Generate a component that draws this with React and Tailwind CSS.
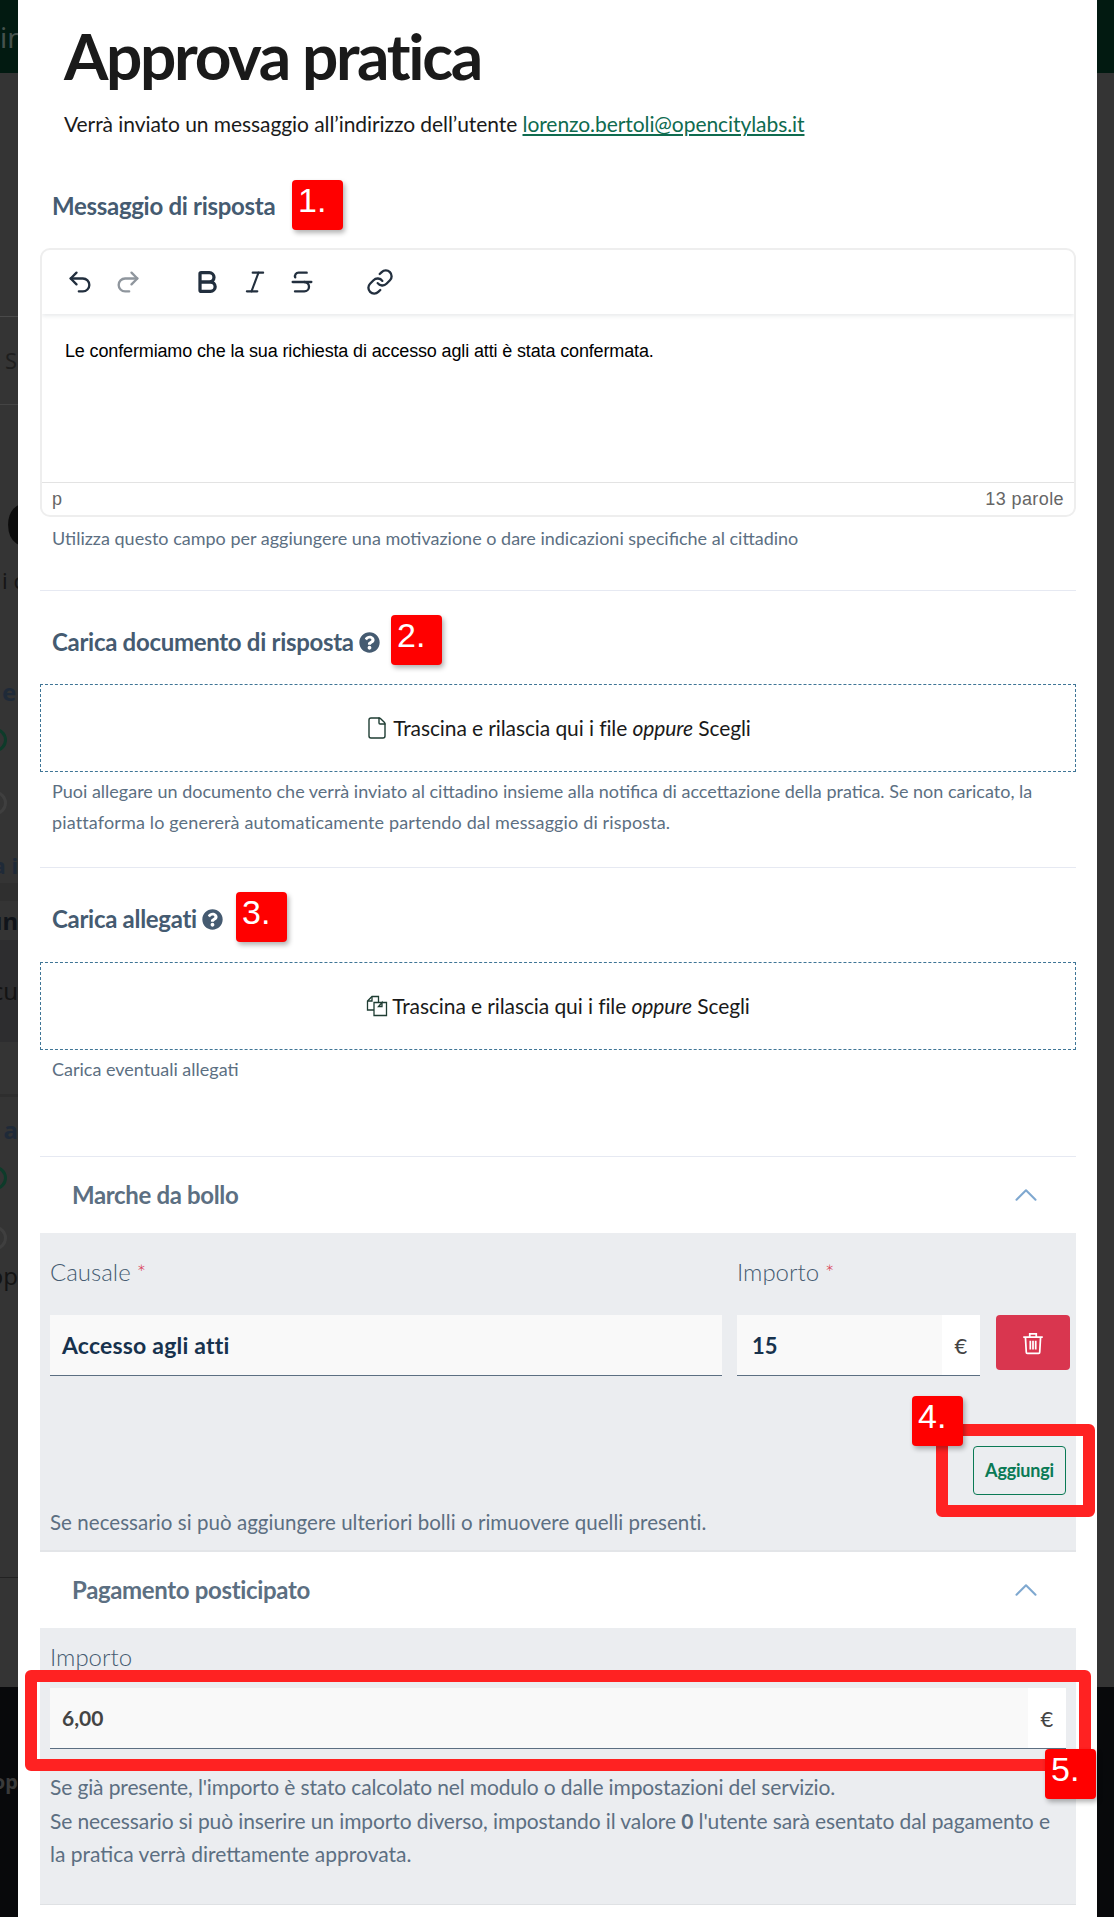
import React from "react";
import { Undo2, Redo2, Bold, Italic, Strikethrough, Link, File, ChevronUp } from "lucide-react";
import { FaQuestionCircle } from "react-icons/fa";

const stripRows = [
  { h: "h-[73px]", bg: "bg-[#021a11]", text: "in", cls: "text-[28px] text-[#46524d]" },
  { h: "h-[243px]" },
  { h: "h-px", bg: "bg-[#4a4a4a]" },
  { h: "h-[87px]", text: "S", cls: "pl-[5px] text-[22px] text-[#1e1e1e]" },
  { h: "h-px", bg: "bg-[#444]" },
  { h: "h-[85px]" },
  { h: "h-[66px]", text: "C", cls: "pl-[5px] text-[60px] font-black text-[#0c0c0c]" },
  { h: "h-[48px]", text: "i c", cls: "pl-[2px] text-[22px] text-[#161616]" },
  { h: "h-[64px]" },
  { h: "h-[48px]", text: "e", cls: "pl-[2px] text-[24px] font-bold text-[#1f2a38]" },
  { h: "h-[48px]", ring: "border-[#0e3b2a]" },
  { h: "h-[22px]" },
  { h: "h-[34px]", ring: "border-[#3f3f3f]" },
  { h: "h-[27px]" },
  { h: "h-[36px]", text: "a i", cls: "text-[22px] font-bold text-[#1f2a38] justify-end" },
  { h: "h-[18px]", bg: "bg-[#2f2f2f]" },
  { h: "h-[39px]", text: "un", cls: "text-[24px] font-bold text-[#10141a] justify-end" },
  { h: "h-[102px]", bg: "bg-[#2d2d2f]", text: "ocu", cls: "text-[24px] text-[#141414] justify-end" },
  { h: "h-[52px]" },
  { h: "h-[3px]", bg: "bg-[#2e2e2e]" },
  { h: "h-[13px]" },
  { h: "h-[40px]", text: "i a", cls: "text-[24px] font-bold text-[#1f2a38] justify-end" },
  { h: "h-[56px]", ring: "border-[#0e3b2a]" },
  { h: "h-[10px]" },
  { h: "h-[44px]", ring: "border-[#3f3f3f]" },
  { h: "h-[32px]", text: "op", cls: "text-[24px] text-[#141414] justify-end" },
  { h: "h-[285px]" },
  { h: "h-px", bg: "bg-[#222]" },
  { h: "h-[109px]" },
  { h: "h-[190px]", bg: "bg-[#08090b]", text: "op", cls: "text-[20px] font-bold text-[#3a3a3a] justify-end" },
  { h: "h-[40px]", bg: "bg-[#08090b]" },
];

function LeftStrip() {
  return (
    <div className="w-[18px] shrink-0 overflow-hidden bg-[#343434] font-['Noto_Sans',sans-serif]">
      {stripRows.map((r, i) => (
        <div key={i} className={`flex items-center overflow-hidden whitespace-nowrap ${r.h} ${r.bg || ""} ${r.cls || ""}`}>
          {r.text}
          {r.ring && <span className={`ml-[-17px] h-[24px] w-[24px] shrink-0 rounded-full border-[3px] ${r.ring}`} />}
        </div>
      ))}
    </div>
  );
}

function RightStrip() {
  return (
    <div className="flex w-[17px] shrink-0 flex-col">
      <div className="h-[73px] bg-[#021a11]" />
      <div className="h-[1614px] bg-[#343434]" />
      <div className="flex-1 bg-[#08090b]" />
    </div>
  );
}

function Badge({ n, className }) {
  return (
    <div className={`absolute h-[50px] w-[51px] rounded-[4px] bg-[#ff0000] px-[6px] pt-[1px] font-['Liberation_Sans',sans-serif] text-[34px] leading-[38px] text-white shadow-[2px_3px_5px_rgba(0,0,0,0.3)] ${className}`}>
      {n}
    </div>
  );
}

function HelpIcon() {
  return <FaQuestionCircle className="ml-[5px] h-[21px] w-[21px] text-[#455b71]" />;
}

function FilesIcon() {
  return (
    <svg viewBox="0 0 22 22" className="h-[22px] w-[22px] text-[#1f3d33]" fill="none" stroke="currentColor" strokeWidth="1.3">
      <path d="M8 15H1.5V6L6 1.5h6.5V7" />
      <path d="M2 6h4V2" />
      <path d="M8 7.5h8.5l4 0V20.5H8Z" />
      <path d="M16 7.5l-3.5 4h3.5Z" />
    </svg>
  );
}

function Dropzone({ icon }) {
  return (
    <div className="flex h-[88px] items-center justify-center border border-dashed border-[#3f7596] text-[21px] tracking-[-0.1px] text-[#1a1a1a]">
      {icon}
      <span className="ml-[4px]">
        Trascina e rilascia qui i file <em>oppure</em> Scegli
      </span>
    </div>
  );
}

function AccordionHeader({ title }) {
  return (
    <div className="flex h-[76px] items-center justify-between pl-[32px] pr-[31px]">
      <span className="text-[24px] font-bold tracking-[-0.35px] text-[#5c6f82]">{title}</span>
      <ChevronUp className="h-[38px] w-[38px] text-[#7fa8d0]" strokeWidth={1.3} />
    </div>
  );
}

function Amount({ value, className, textClass }) {
  return (
    <div className={`flex h-[61px] border-b border-[#5c6f82] bg-white ${className}`}>
      <div className={`flex flex-1 items-center bg-[#f9f9f9] font-bold ${textClass}`}>{value}</div>
      <div className="flex w-[38px] items-center justify-center text-[22px] text-[#444]">€</div>
    </div>
  );
}

const toolIcon = "h-[28px] w-[28px] text-[#222f3e]";
const sectionLabel = "flex h-[40px] items-center pl-[12px] text-[24px] font-bold tracking-[-0.3px] text-[#455b71]";
const helpText = "pl-[12px] text-[18px] leading-[31px] text-[#5c6f82]";

export default function App() {
  return (
    <div className="relative flex h-[1917px] w-[1114px] overflow-hidden font-['Lato',sans-serif]">
      <LeftStrip />
      <main className="w-[1079px] shrink-0 bg-white pl-[22px] pr-[21px]">
        <h1 className="mt-[20px] flex h-[72px] items-center pl-[24px] text-[64px] font-bold tracking-[-2.35px] text-[#1a1a1a]">Approva pratica</h1>
        <p className="mt-[12px] flex h-[40px] items-center pl-[24px] text-[21px] tracking-[-0.07px] text-[#1a1a1a]">
          <span className="whitespace-pre">Verrà inviato un messaggio all’indirizzo dell’utente </span>
          <a className="text-[#0f6b4f] underline">lorenzo.bertoli@opencitylabs.it</a>
        </p>

        <div className={`mt-[42px] ${sectionLabel}`}>Messaggio di risposta</div>
        <div className="mt-[22px] flex h-[269px] flex-col overflow-hidden rounded-[10px] border-2 border-[#eeeeee]">
          <div className="flex h-[64px] items-center pl-[24px] shadow-[0_2px_4px_rgba(34,47,62,0.1)]">
            <Undo2 className={toolIcon} strokeWidth={2} />
            <Redo2 className={`${toolIcon} ml-[20px] opacity-50`} strokeWidth={2} />
            <Bold className={`${toolIcon} ml-[51px]`} strokeWidth={2.8} />
            <Italic className={`${toolIcon} ml-[20px]`} strokeWidth={1.8} />
            <Strikethrough className={`${toolIcon} ml-[19px]`} strokeWidth={2} />
            <Link className={`${toolIcon} ml-[50px]`} strokeWidth={2} />
          </div>
          <div className="h-[168px] pl-[23px] pt-[24px] font-['Liberation_Sans',sans-serif] text-[18px] leading-[26px] tracking-[-0.14px] text-black">
            Le confermiamo che la sua richiesta di accesso agli atti è stata confermata.
          </div>
          <div className="flex h-[33px] items-center justify-between border-t border-[#e3e3e3] pl-[10px] pr-[10px] font-['Liberation_Sans',sans-serif] text-[18px] tracking-[0.4px] text-[#666]">
            <span>p</span>
            <span>13 parole</span>
          </div>
        </div>
        <div className="flex h-[42px] items-center pl-[12px] text-[18px] text-[#5c6f82]">
          Utilizza questo campo per aggiungere una motivazione o dare indicazioni specifiche al cittadino
        </div>

        <div className="mt-[31px] h-px bg-[#e6e9f2]" />
        <div className={`mt-[31px] ${sectionLabel}`}>
          Carica documento di risposta
          <HelpIcon />
        </div>
        <div className="mt-[22px]">
          <Dropzone icon={<File className="h-[24px] w-[24px] text-[#1f3d33]" strokeWidth={1.4} />} />
        </div>
        <p className={`mt-[4px] ${helpText}`}>
          Puoi allegare un documento che verrà inviato al cittadino insieme alla notifica di accettazione della pratica. Se non caricato, la
          <br />
          <span className="tracking-[0.14px]">piattaforma lo genererà automaticamente partendo dal messaggio di risposta.</span>
        </p>

        <div className="mt-[29px] h-px bg-[#e6e9f2]" />
        <div className={`mt-[31px] ${sectionLabel}`}>
          Carica allegati
          <HelpIcon />
        </div>
        <div className="mt-[23px]">
          <Dropzone icon={<FilesIcon />} />
        </div>
        <p className={`mt-[4px] h-[31px] ${helpText}`}>Carica eventuali allegati</p>

        <div className="mt-[71px] h-px bg-[#e6e9f2]" />
        <AccordionHeader title="Marche da bollo" />
        <section className="h-[319px] border-b-2 border-[#e3e5e8] bg-[#ebedf0] pl-[10px] pr-[6px] pt-[19px]">
          <div className="flex gap-[15px]">
            <div className="w-[672px]">
              <div className="flex h-[40px] items-center text-[24px] font-light text-[#455b71]">
                Causale<span className="ml-[6px] text-[22px] text-[#d9364f]">*</span>
              </div>
              <div className="mt-[23px] flex h-[61px] items-center border-b border-[#5c6f82] bg-[#f9f9f9] pl-[12px] text-[23px] font-bold tracking-[0.2px] text-[#17324d]">Accesso agli atti</div>
            </div>
            <div className="w-[243px]">
              <div className="flex h-[40px] items-center text-[24px] font-light text-[#455b71]">
                Importo<span className="ml-[6px] text-[22px] text-[#d9364f]">*</span>
              </div>
              <Amount value="15" className="mt-[23px]" textClass="pl-[15px] text-[22px] text-[#17324d]" />
            </div>
            <button className="mt-[63px] ml-px flex h-[55px] w-[74px] items-center justify-center rounded-[4px] bg-[#d9364f]">
              <svg viewBox="0 0 24 24" className="h-[26px] w-[26px] text-white" fill="none" stroke="currentColor" strokeWidth="1.6">
                <path d="M3 6.5h18M9 6V3.5h6V6M5 6.5l.8 14a1 1 0 0 0 1 1h10.400a1 1 0 0 0 1-1l.8-14M9.500 10v8M12 10v8M14.500 10v8" />
              </svg>
            </button>
          </div>
          <div className="mt-[70px] flex justify-end pr-[4px]">
            <button className="h-[49px] w-[93px] rounded-[4px] border border-[#0a7a55] text-[18px] font-bold tracking-[-0.2px] text-[#0a7a55]">Aggiungi</button>
          </div>
          <p className="mt-[12px] flex h-[30px] items-center text-[20.500px] tracking-[0.05px] text-[#5c6f82]">Se necessario si può aggiungere ulteriori bolli o rimuovere quelli presenti.</p>
        </section>
        <AccordionHeader title="Pagamento posticipato" />
        <section className="h-[277px] border-b border-[#dfe1e4] bg-[#ebedf0] pl-[10px] pr-[10px] pt-[14px]">
          <div className="flex h-[30px] items-center text-[24px] font-light text-[#455b71]">Importo</div>
          <Amount value="6,00" className="mt-[16px]" textClass="pl-[12px] text-[21px] text-[#444]" />
          <p className="mt-[21px] text-[21px] leading-[33.5px] text-[#5c6f82]">
            <span className="tracking-[-0.13px]">Se già presente, l'importo è stato calcolato nel modulo o dalle impostazioni del servizio.</span>
            <br />
            <span className="tracking-[-0.1px]">Se necessario si può inserire un importo diverso, impostando il valore <b>0</b> l'utente sarà esentato dal pagamento e</span>
            <br />
            la pratica verrà direttamente approvata.
          </p>
        </section>
      </main>
      <RightStrip />

      <div className="absolute left-[936px] top-[1424px] h-[93px] w-[159px] rounded-[6px] border-[12px] border-[#ff2222]" />
      <div className="absolute left-[25px] top-[1670px] h-[101px] w-[1066px] rounded-[6px] border-[12px] border-[#ff2222]" />
      <Badge n="1." className="left-[292px] top-[180px]" />
      <Badge n="2." className="left-[391px] top-[615px]" />
      <Badge n="3." className="left-[236px] top-[892px]" />
      <Badge n="4." className="left-[912px] top-[1396px]" />
      <Badge n="5." className="left-[1045px] top-[1749px]" />
    </div>
  );
}
